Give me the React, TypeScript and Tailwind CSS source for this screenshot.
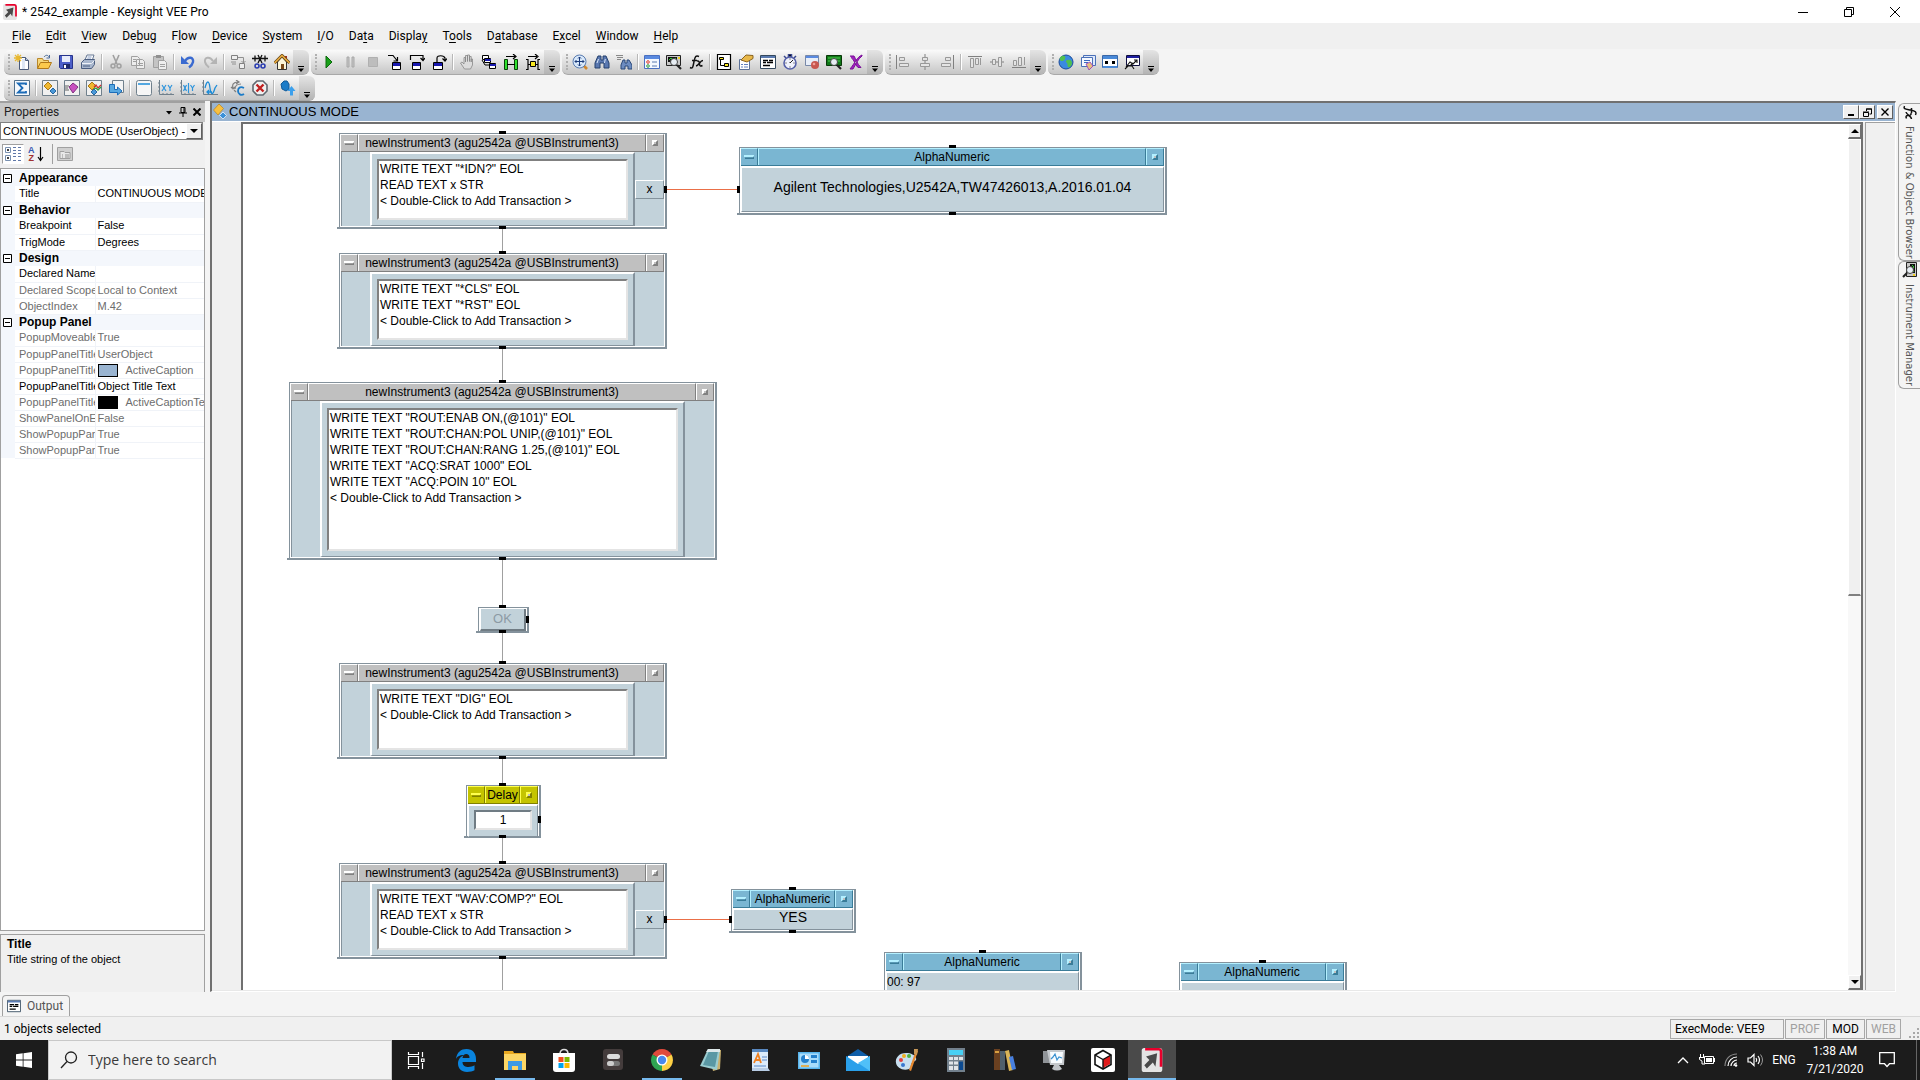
import type { ReactNode } from 'react';

const menus = [
  ['', 'F', 'ile'],
  ['', 'E', 'dit'],
  ['', 'V', 'iew'],
  ['De', 'b', 'ug'],
  ['F', 'l', 'ow'],
  ['', 'D', 'evice'],
  ['', 'S', 'ystem'],
  ['', 'I', '/O'],
  ['Da', 't', 'a'],
  ['Displa', 'y', ''],
  ['T', 'o', 'ols'],
  ['D', 'a', 'tabase'],
  ['E', 'x', 'cel'],
  ['', 'W', 'indow'],
  ['', 'H', 'elp'],
];

const GREY = '#a0a0a0';

const icons: Record<string, ReactNode> = {
  New: (
    <>
      <path d="M5.5 3.5h6l3 3v9h-9z" fill="#fff" stroke="#4a5a78" />
      <path d="M8 5h3v10H8z" fill="#dde6f4" />
      <path d="M11.5 3.5v3h3" fill="#b8c8e0" stroke="#4a5a78" />
      <path d="M4 0v8M0 4h8M1 1l6 6M7 1L1 7" stroke="#e8b830" strokeWidth="1.3" />
    </>
  ),
  Open: (
    <>
      <path d="M1.5 14.5v-10h5l1 2h5v3" fill="#f6d77a" stroke="#b8862a" />
      <path d="M1.5 14.5l3-6h11l-3 6z" fill="#fbc94c" stroke="#b07818" />
      <path d="M8 3c2-2.5 4-2 5 0M13.5 1v3h-3" fill="none" stroke="#4a6a98" />
    </>
  ),
  Save: (
    <>
      <path d="M1.5 1.5h13v13h-12l-1-1z" fill="#4d5fc8" stroke="#27348c" />
      <path d="M4 2h8v6H4z" fill="#e8ecfa" />
      <path d="M5 10h7v4H5z" fill="#1f2a6a" />
      <path d="M6 11h2v3H6z" fill="#fff" />
    </>
  ),
  Print: (
    <>
      <path d="M5 6l2-5h7l-2 6z" fill="#fff" stroke="#667894" />
      <path d="M7.5 3h4M7 5h4" stroke="#8aa0c8" />
      <path d="M1.5 8.5l3-3h10v5l-3 4h-10z" fill="#a9b7cd" stroke="#4b5e80" />
      <path d="M2 9.5h9.5l3-3" fill="none" stroke="#eef2f8" />
      <path d="M3 12h7" stroke="#4b5e80" />
    </>
  ),
  Cut: (
    <>
      <path d="M5 1l4 9M11 1L7 10" stroke={GREY} strokeWidth="1.6" />
      <circle cx="5" cy="12" r="2" fill="none" stroke={GREY} strokeWidth="1.5" />
      <circle cx="11" cy="12" r="2" fill="none" stroke={GREY} strokeWidth="1.5" />
    </>
  ),
  Copy: (
    <>
      <path d="M1.5 2.5h6l2 2v7h-8zM6.5 5.5h6l2 2v7h-8z" fill="#ededed" stroke={GREY} />
      <path d="M3 5.5h3M3 7.5h3M8 9.5h5M8 11.5h5" stroke={GREY} />
    </>
  ),
  Paste: (
    <>
      <path d="M1.5 2.5h10v11h-10z" fill="#c4c4c4" stroke={GREY} />
      <path d="M4 1h5v3H4z" fill="#909090" />
      <path d="M6.5 6.5h6l2 2v7h-8z" fill="#eee" stroke={GREY} />
      <path d="M8 10.5h5M8 12.5h5" stroke={GREY} />
    </>
  ),
  Undo: (
    <>
      <path d="M5 7c3-5 9-4 8 1-.5 2.5-2 4-4 5.5" fill="none" stroke="#3a6ad0" strokeWidth="2.4" />
      <path d="M1 2v8h8z" fill="#3a6ad0" />
    </>
  ),
  Redo: (
    <>
      <path d="M11 7C8 2 2 3 3 8c.5 2.5 2 4 4 5.5" fill="none" stroke="#b4b4b4" strokeWidth="2" />
      <path d="M15 3v7H8z" fill="#b4b4b4" />
    </>
  ),
  'Add terminal': (
    <>
      <path d="M1.5 1.5h6v4h-6zM9.5 9.5h5v5h-5z" fill="#eee" stroke="#808080" />
      <path d="M8 3.5h5.5V9M11.5 7l2 2 2-2M1 8h5M2 10h4" fill="none" stroke="#909090" />
    </>
  ),
  'Clean up lines': (
    <>
      <path d="M0 4.5h3v-3M3 4.5v3M16 4.5h-3v-3M13 4.5v3M3 4.5h10M6 1l4 8M10 1L6 9" fill="none" stroke="#111" strokeWidth="1.3" />
      <circle cx="5" cy="12" r="2" fill="none" stroke="#2a3cb0" strokeWidth="1.6" />
      <circle cx="11" cy="12" r="2" fill="none" stroke="#2a3cb0" strokeWidth="1.6" />
    </>
  ),
  Home: (
    <>
      <path d="M11 2h2v5h-2z" fill="#a03020" />
      <path d="M3.5 8v7.5h9V8L8 3z" fill="#fdf6d8" stroke="#333" />
      <path d="M.5 9L8 1.5 15.5 9" fill="none" stroke="#6a4a18" strokeWidth="3" />
      <path d="M.5 9L8 1.5 15.5 9" fill="none" stroke="#f0b040" strokeWidth="1.4" />
      <path d="M7 10h3v5H7z" fill="#7a4a18" />
    </>
  ),
  Run: <path d="M5 2l6 6-6 6z" fill="#18a018" stroke="#0c6a0c" />,
  Pause: <path d="M4 3h2v10H4zM9 3h2v10H9z" fill="#c6c6c6" stroke="#a8a8a8" />,
  Stop: <path d="M3.5 3.5h9v9h-9z" fill="#bdbdbd" stroke="#b0b0b0" />,
  'Step into': (
    <>
      <path d="M1 1.5h5l4 5M10.5 3v4h-4" fill="none" stroke="#000" strokeWidth="1.2" />
      <path d="M5.5 8.5h8v7h-8z" fill="#fff" stroke="#000" />
      <path d="M6 9h7v3H6z" fill="#1818b0" />
    </>
  ),
  'Step over': (
    <>
      <path d="M1.5 6V1.5H14V6M11.5 4L14 6.5 16 4" fill="none" stroke="#000" strokeWidth="1.2" />
      <path d="M3.5 8.5h8v7h-8z" fill="#fff" stroke="#000" />
      <path d="M4 9h7v3H4z" fill="#1818b0" />
    </>
  ),
  'Step out': (
    <>
      <path d="M6 8V4c0-3 7-3 8 0v2M11.5 4.5L14 7l2-2.5" fill="none" stroke="#000" strokeWidth="1.2" />
      <path d="M2.5 8.5h9v7h-9z" fill="#fff" stroke="#000" />
      <path d="M3 9h8v3H3z" fill="#1818b0" />
    </>
  ),
  Breakpoint: (
    <path
      d="M5.5 15l-4-6 1.5-1 2 2V3.5h1.5V8 1.5h2V7.5 1h2v6.5V2.5h1.7V8 5h1.3v6l-2 4z"
      fill="#dcdcdc"
      stroke="#888"
      strokeWidth=".8"
    />
  ),
  'Line probe': (
    <>
      <path d="M1.5 1.5h6v4h-6zM3.5 4.5h6v4h-6zM8.5 9.5h6v5h-6z" fill="#fff" stroke="#000" />
      <path d="M4 5h6v2H4zM9 10h6v2H9z" fill="#1818b0" />
      <path d="M1 6l3 5h4" fill="none" stroke="#000" />
    </>
  ),
  'Show data flow': (
    <>
      <path d="M1.5 5.5h3v10h-3zM11.5 5.5h3v10h-3z" fill="#30e030" stroke="#084008" />
      <path d="M4 10.5h8M3 2.5h9M10 0l3 2.5L10 5" fill="none" stroke="#000" strokeWidth="1.2" />
    </>
  ),
  'Show execution flow': (
    <>
      <path d="M1 5.5h2v10H1M15 5.5h-2v10h2M3 10.5h10M3 2.5h9M10 0l3 2.5L10 5" fill="none" stroke="#000" strokeWidth="1.2" />
      <path d="M5.5 7.5h5v5h-5z" fill="#f8e820" stroke="#000" />
    </>
  ),
  Zoom: (
    <>
      <path d="M11 11l4 4" stroke="#d08830" strokeWidth="2.6" />
      <circle cx="7.5" cy="7.5" r="6.5" fill="#d8e8fa" stroke="#5a7cb0" />
      <path
        d="M7.5 3v9M3 7.5h9M6 4.5L7.5 3 9 4.5M6 10.5L7.5 12 9 10.5M4.5 6L3 7.5 4.5 9M10.5 6L12 7.5 10.5 9"
        fill="none"
        stroke="#1a3a7a"
      />
    </>
  ),
  Find: (
    <>
      <path d="M4 2h3v4h2V2h3l3 7v5h-5v-5H6v5H1V9z" fill="#5a78b0" stroke="#24406e" />
      <path d="M3 9l1.5-4M10.5 9l.8-4" stroke="#dce8fa" />
    </>
  ),
  'Find in file': (
    <>
      <path d="M0 1.5h7M1 3.5h6M1 5.5h4" stroke="#888" />
      <path d="M7 6h2v3h2V6h2l3 5v4h-4v-3H9v3H5v-4z" fill="#6d8cc0" stroke="#2a4878" />
    </>
  ),
  'Program explorer': (
    <>
      <path d="M.5 1.5h15v13H.5z" fill="#f4f8ff" stroke="#4a70c0" />
      <path d="M1 2h14v3H1z" fill="#5a8ae0" />
      <circle cx="4" cy="8" r="1.3" fill="none" stroke="#e04030" />
      <circle cx="4" cy="12" r="1.3" fill="none" stroke="#30a040" />
      <path d="M8 8h5M8 12h5" stroke="#5a7ab0" />
    </>
  ),
  'Instrument manager': (
    <>
      <path d="M.5 1.5h14v10H.5z" fill="#c8c8c8" stroke="#222" />
      <path d="M2 3h9v5H2z" fill="#111" />
      <path d="M3 6l2-2 2 2 3-2" fill="none" stroke="#30d030" />
      <circle cx="8" cy="8" r="3.5" fill="#e8eef4" stroke="#444" />
      <path d="M11 11l4 4" stroke="#222" strokeWidth="2.2" />
      <path d="M12 3h2v2h-2z" fill="#f0d020" />
    </>
  ),
  'Function browser': (
    <path
      d="M2 13.5c3 1.5 3-1 4-6s2-6.5 5-5M4 6.5h5M9 7c2-.5 2.5 1 2.5 3s1 2.5 3 1.5M15 6.5c-3 0-4 5-7 5.5"
      fill="none"
      stroke="#111"
      strokeWidth="1.5"
    />
  ),
  'Example explorer': (
    <>
      <path d="M1.5.5h13v15h-13z" fill="#fff" stroke="#000" strokeWidth="1.2" />
      <path d="M4.5 5v6.5H8" fill="none" stroke="#000" />
      <path d="M3.5 3.5h4v2h-4zM8.5 9.5h4v3h-4z" fill="#f8e820" stroke="#000" />
    </>
  ),
  Properties: (
    <>
      <path d="M1.5 5.5h10v10h-10z" fill="#fff" stroke="#5a7098" />
      <path d="M3 10.5h2M6 10.5h4M3 13h2M6 13h4" stroke="#6080c0" />
      <path d="M3 6l5-5 7 .5v3L9 8z" fill="#e8b84a" stroke="#8a6420" />
    </>
  ),
  Output: (
    <>
      <path d="M.5 1.5h15v13H.5z" fill="#fff" stroke="#34495e" />
      <path d="M1 2h14v2H1z" fill="#5a7ab0" />
      <path d="M3 6.5h5M9 6.5h4M3 8.5h3M7 8.5h6M3 11.5h7" stroke="#000" strokeWidth="1.3" />
    </>
  ),
  Profiler: (
    <>
      <path d="M6.5 0h3v3h-3zM2 2l2 2M14 2l-2 2" stroke="#3a4a90" strokeWidth="1.5" />
      <circle cx="8" cy="9" r="6" fill="#f0f2fc" stroke="#5560a8" strokeWidth="1.6" />
      <path d="M8 9l3-3M8 9V8M8 4.5v1M8 12.5v1M3.5 9h1M11.5 9h1" stroke="#222" />
    </>
  ),
  'Stop on error': (
    <>
      <path d="M1.5 1.5h13v10h-13z" fill="#e8eef8" stroke="#7888a8" />
      <path d="M2 2h12v2H2z" fill="#5a8ae0" />
      <circle cx="11" cy="11" r="4" fill="#c85850" />
      <circle cx="10" cy="10" r="1.3" fill="#f0a098" />
    </>
  ),
  'Alert window': (
    <>
      <path d="M.5 1.5h15v10H.5z" fill="#107818" stroke="#083808" />
      <path d="M2 4h12M2 7h12" stroke="#50d050" />
      <circle cx="8" cy="8" r="3.5" fill="#e8eef4" stroke="#444" />
      <path d="M11 11l4 4" stroke="#222" strokeWidth="2.2" />
    </>
  ),
  'Excel library': (
    <path d="M2 2h4c2 3 3 8 7 11.5h-3C7 11 6 5 3 3.5M14 1C9 3 7 9 2 15h3C8 10 10 5 14 2z" fill="#a020c0" stroke="#7a1098" />
  ),
  'Align left': (
    <>
      <path d="M1.5 1v14" stroke="#808080" />
      <path d="M4.5 3.5h5v3h-5zM4.5 9.5h9v3h-9z" fill="#e4e4e4" stroke="#989898" />
    </>
  ),
  'Align center': (
    <>
      <path d="M8 0v16" stroke="#808080" />
      <path d="M5.5 3.5h5v3h-5zM3.5 9.5h9v3h-9z" fill="#e4e4e4" stroke="#989898" />
    </>
  ),
  'Align right': (
    <>
      <path d="M14.5 1v14" stroke="#808080" />
      <path d="M6.5 3.5h5v3h-5zM2.5 9.5h9v3h-9z" fill="#e4e4e4" stroke="#989898" />
    </>
  ),
  'Align top': (
    <>
      <path d="M1 2.5h14" stroke="#808080" />
      <path d="M3.5 4.5h3v9h-3zM8.5 4.5h3v6h-3zM13.5 4v7" fill="#e4e4e4" stroke="#989898" />
    </>
  ),
  'Align middle': (
    <>
      <path d="M1 8h14" stroke="#808080" />
      <path d="M3.5 5.5h3v5h-3zM9.5 3.5h3v9h-3z" fill="#e4e4e4" stroke="#989898" />
    </>
  ),
  'Align bottom': (
    <>
      <path d="M1 13.5h14" stroke="#808080" />
      <path d="M2.5 6.5h3v5h-3zM7.5 3.5h3v8h-3zM13.5 3v8" fill="#e4e4e4" stroke="#989898" />
    </>
  ),
  'Web site': (
    <>
      <circle cx="8" cy="8" r="7" fill="#3a8ae0" stroke="#1c4a9a" />
      <path d="M4 2c3-1 4 1 3 3S3 8 2 6s0-3 2-4zM9 6c3-1 5 0 5 3s-3 5-4 4 0-3-1-4-2-2 0-3z" fill="#50c050" />
    </>
  ),
  Documents: (
    <>
      <path d="M3.5 1.5h12v10h-12z" fill="#dfe9fa" stroke="#4a70b8" />
      <path d="M1.5 3.5h11v9h-11z" fill="#f4f8ff" stroke="#4a70b8" />
      <path d="M4 6.5h6M4 8.5h4" stroke="#3a6ac0" />
      <path d="M6 10l4-2 3 4-4 4z" fill="#e8c080" stroke="#a050b8" />
    </>
  ),
  Panel: (
    <>
      <path d="M.5 1.5h15v12H.5z" fill="#fff" stroke="#3a68a8" />
      <path d="M1 2h14v3H1zM1 12h14v2H1z" fill="#4a8ad8" />
      <path d="M3 7h3v3H3zM10 7h3v3h-3z" fill="#000" />
    </>
  ),
  Plotter: (
    <>
      <path d="M2.5 1.5h13v10h-13z" fill="#fff" stroke="#101040" />
      <path d="M3 2h12v2H3z" fill="#2020a0" />
      <path d="M2 13l4-5 3 2 4-4M10 6h3v3M1 15l3-3h4l2 3M6 12l3-3" fill="none" stroke="#111" strokeWidth="1.1" />
    </>
  ),
  Formula: (
    <>
      <path d="M.5.5h15v15H.5z" fill="#f4f8fc" stroke="#50708c" />
      <path d="M12 5V3.5H4L8.5 8 4 12.5h8V11" fill="none" stroke="#1c6cb8" strokeWidth="1.8" />
    </>
  ),
  'User object': (
    <>
      <path d="M.5.5h15v15H.5z" fill="#f0f0f0" stroke="#70808c" />
      <path d="M6 2l4 4-4 4-4-4z" fill="#f0b830" stroke="#a87818" />
      <path d="M11 8l3 3-3 3-3-3z" fill="#4a98d8" stroke="#2868a0" />
    </>
  ),
  'User function': (
    <>
      <path d="M.5.5h15v15H.5z" fill="#f0f0f0" stroke="#70808c" />
      <path d="M9 3l5 4-5 6-4-6z" fill="#c850c0" stroke="#803080" />
      <path d="M1 6h4M1 8h3M1 10h4" stroke="#606060" />
    </>
  ),
  'Call function': (
    <>
      <path d="M.5.5h15v15H.5z" fill="#f0f0f0" stroke="#70808c" />
      <path d="M6 2l4 4-4 4-4-4z" fill="#f0b830" stroke="#a87818" />
      <path d="M8 7l2-2 2 3 3-3" fill="none" stroke="#d03030" strokeWidth="1.3" />
      <path d="M8 9l2-1 2 2 3-3" fill="none" stroke="#30a040" strokeWidth="1.3" />
      <path d="M8 9l3 3-3 3-3-3z" fill="#4a98d8" stroke="#2868a0" />
    </>
  ),
  Import: (
    <>
      <path d="M4.5.5h11v12h-11z" fill="#f4f4f4" stroke="#70808c" />
      <path d="M1.5 4.5h5v5h3V7l4.5 4-4.5 4v-2.5h-8z" fill="#58a8e0" stroke="#1c6cb8" />
    </>
  ),
  Display: (
    <>
      <rect x=".5" y=".5" width="15" height="15" rx="2" fill="#f6f6f6" stroke="#70808c" />
      <path d="M2 4h12" stroke="#1c8cd8" strokeWidth="1.6" />
    </>
  ),
  'XY trace': (
    <>
      <path d="M1.5 0v14.5H16M0 3h2M0 7h2M0 11h2M5 13v2M9 13v2M13 13v2" fill="none" stroke="#70808c" />
      <path d="M4 5l4 6M8 5l-4 6M10 5l2 3 2-3M12 8v3" fill="none" stroke="#2c94dc" strokeWidth="1.2" />
    </>
  ),
  'X vs Y plot': (
    <>
      <path d="M1.5 0v14.5H16M0 3h2M0 7h2M0 11h2M5 13v2M9 13v2M13 13v2" fill="none" stroke="#70808c" />
      <path d="M3.5 5l3 6M6.5 5l-3 6M8.5 3v10M10.5 5l2 3 2-3M12.5 8v3" fill="none" stroke="#2c94dc" strokeWidth="1.2" />
    </>
  ),
  'Waveform display': (
    <>
      <path d="M1.5 0v14.5H16M0 3h2M0 7h2M0 11h2" fill="none" stroke="#70808c" />
      <path d="M3 8c2-8 4-8 5 0s3 7 5 0l2-3M10 12H5M7 10l-2 2 2 2" fill="none" stroke="#1c8cd8" strokeWidth="1.3" />
    </>
  ),
  'Confirm context': (
    <>
      <path d="M8 2C3 2 2 5 3 8M11 4C7 4 5 6 5 9M6 0l3 2-3 2M1 7l2 2 2-2M4 10l2 2" fill="none" stroke="#808080" strokeWidth="1.2" />
      <path d="M14 8c-4-2-6 0-6 3s3 5 6 3" fill="none" stroke="#1c7cc8" strokeWidth="1.8" />
    </>
  ),
  'Delete object': (
    <>
      <path d="M5 1h6l4 4v6l-4 4H5l-4-4V5z" fill="#f0f0f0" stroke="#606870" strokeWidth="1.6" />
      <path d="M4.5 4.5l7 7M11.5 4.5l-7 7" stroke="#c02020" strokeWidth="2.4" />
    </>
  ),
  Upload: (
    <>
      <path d="M1 4l3-3h3l2 3v5l-3 2-4-2z" fill="#1c7cc8" stroke="#125a98" />
      <path d="M11.5 6l4 5H13v4.5h-3V11H7.5z" fill="#3ca0ec" />
    </>
  ),
};

const toolbarTop = [
  ['New', 'Open', 'Save', 'Print', '|', 'Cut', 'Copy', 'Paste', '|', 'Undo', 'Redo', '|', 'Add terminal', 'Clean up lines', 'Home'],
  ['Run', 'Pause', 'Stop', 'Step into', 'Step over', 'Step out', '|', 'Breakpoint', 'Line probe', 'Show data flow', 'Show execution flow'],
  ['Zoom', 'Find', 'Find in file', '|', 'Program explorer', 'Instrument manager', 'Function browser', '|', 'Example explorer', 'Properties', 'Output', 'Profiler', 'Stop on error', 'Alert window', 'Excel library'],
  ['Align left', 'Align center', 'Align right', '|', 'Align top', 'Align middle', 'Align bottom'],
  ['Web site', 'Documents', 'Panel', 'Plotter'],
];

const toolbarBottom = [
  ['Formula', '|', 'User object', 'User function', 'Call function', 'Import', '|', 'Display', 'XY trace', 'X vs Y plot', 'Waveform display', '|', 'Confirm context', 'Delete object', '|', 'Upload'],
];

type Row = { name: string; value?: string; dim?: boolean; swatch?: 'caption' | 'text' };

const propertyGroups: { title: string; rows: Row[] }[] = [
  { title: 'Appearance', rows: [{ name: 'Title', value: 'CONTINUOUS MODE' }] },
  {
    title: 'Behavior',
    rows: [
      { name: 'Breakpoint', value: 'False' },
      { name: 'TrigMode', value: 'Degrees' },
    ],
  },
  {
    title: 'Design',
    rows: [
      { name: 'Declared Name' },
      { name: 'Declared Scope', value: 'Local to Context', dim: true },
      { name: 'ObjectIndex', value: 'M.42', dim: true },
    ],
  },
  {
    title: 'Popup Panel',
    rows: [
      { name: 'PopupMoveable', value: 'True', dim: true },
      { name: 'PopupPanelTitle', value: 'UserObject', dim: true },
      { name: 'PopupPanelTitle', value: 'ActiveCaption', dim: true, swatch: 'caption' },
      { name: 'PopupPanelTitle', value: 'Object Title Text' },
      { name: 'PopupPanelTitle', value: 'ActiveCaptionText', dim: true, swatch: 'text' },
      { name: 'ShowPanelOnE', value: 'False', dim: true },
      { name: 'ShowPopupPar', value: 'True', dim: true },
      { name: 'ShowPopupPar', value: 'True', dim: true },
    ],
  },
];

type Tone = 'grey' | 'blue' | 'yellow';

const tones: Record<Tone, { bar: string; cell: string; hi: string; lo: string }> = {
  grey: { bar: 'bg-[#c0c0c0] border-b-[#808080]', cell: 'border-white border-r-[#808080]', hi: '#ffffff', lo: '#808080' },
  blue: { bar: 'bg-[#7ab6d2] border-b-[#3a7c98]', cell: 'border-[#b4f0ff] border-r-[#3a7c98]', hi: '#b4f0ff', lo: '#3a7c98' },
  yellow: { bar: 'bg-[#c4c400] border-b-[#808000]', cell: 'border-[#ffff50] border-r-[#808000]', hi: '#ffff50', lo: '#808000' },
};

const instrumentTitle = 'newInstrument3 (agu2542a @USBInstrument3)';
const addLine = '< Double-Click to Add Transaction >';

const instruments = [
  { x: 96, y: 9, w: 328, h: 96, output: 'x', lines: ['WRITE TEXT "*IDN?" EOL', 'READ TEXT x STR', addLine] },
  { x: 96, y: 129, w: 328, h: 96, lines: ['WRITE TEXT "*CLS" EOL', 'WRITE TEXT "*RST" EOL', addLine] },
  {
    x: 46,
    y: 258,
    w: 428,
    h: 178,
    lines: [
      'WRITE TEXT "ROUT:ENAB ON,(@101)" EOL',
      'WRITE TEXT "ROUT:CHAN:POL UNIP,(@101)" EOL',
      'WRITE TEXT "ROUT:CHAN:RANG 1.25,(@101)" EOL',
      'WRITE TEXT "ACQ:SRAT 1000" EOL',
      'WRITE TEXT "ACQ:POIN 10" EOL',
      addLine,
    ],
  },
  { x: 96, y: 539, w: 328, h: 96, lines: ['WRITE TEXT "DIG" EOL', addLine] },
  { x: 96, y: 739, w: 328, h: 96, output: 'x', lines: ['WRITE TEXT "WAV:COMP?" EOL', 'READ TEXT x STR', addLine] },
];

const wires = [
  [105, 129],
  [225, 258],
  [436, 483],
  [509, 539],
  [635, 661],
  [714, 739],
  [835, 880],
];

function Icon({ name }: { name: string }) {
  return (
    <svg viewBox="0 0 16 16" className="h-4 w-4" aria-hidden="true">
      {icons[name]}
    </svg>
  );
}

function Logo({ className }: { className: string }) {
  return (
    <svg viewBox="0 0 24 28" className={className} aria-hidden="true">
      <rect width="24" height="28" rx="3" fill="#e4e4e4" />
      <path d="M4 1.5h16q2.5 0 2.5 3V22" fill="none" stroke="#e8002c" strokeWidth="3" />
      <path d="M5 10l13-4-2 16-3-5-7 7-3-4 6-6z" fill="#4a4a4a" />
    </svg>
  );
}

function Toolbar({ items }: { items: string[] }) {
  return (
    <div role="toolbar" className="flex h-[25px] items-stretch overflow-hidden rounded-md border-b border-[#a8a8a8] bg-linear-to-b from-[#fafafa] to-[#c6c6c6]">
      <span className="my-1 ml-1 w-[3px] border-l-2 border-dotted border-[#b0b0b0]" />
      {items.map((item, i) =>
        item === '|' ? (
          <span key={i} className="mx-0.5 my-1 w-0.5 border-l border-[#b8b8b8] bg-white" />
        ) : (
          <button key={i} type="button" aria-label={item} className="flex w-[22px] items-center justify-center">
            <Icon name={item} />
          </button>
        ),
      )}
      <button type="button" aria-label="Toolbar options" className="flex w-4 items-end justify-center bg-linear-to-b from-[#e4e4e4] to-[#b4b4b4] pb-0.5">
        <svg viewBox="0 0 6 6" className="h-1.5 w-1.5">
          <path d="M0 0h6v1H0zM0 2.5h6L3 6z" fill="#000" />
        </svg>
      </button>
    </div>
  );
}

function PropertiesPanel() {
  return (
    <aside className="flex w-[205px] shrink-0 flex-col bg-[#f0f0f0]">
      <div className="flex h-[21px] items-center justify-between border-t-2 border-[#a0a0a0] bg-[#c8c8c8] pr-1 pb-px pl-1 text-[#222]">
        <h2>Properties</h2>
        <div className="flex items-center gap-1.5">
          <button type="button" aria-label="Panel menu">
            <svg viewBox="0 0 8 8" className="h-2 w-2">
              <path d="M1 3h6L4 6.5z" />
            </svg>
          </button>
          <button type="button" aria-label="Auto hide">
            <svg viewBox="0 0 8 10" className="h-2.5 w-2">
              <path d="M2 .5h4v5H2zM5 0v6M0 6h8M4 6v4" fill="none" stroke="#000" />
            </svg>
          </button>
          <button type="button" aria-label="Close panel">
            <svg viewBox="0 0 8 8" className="h-2 w-2">
              <path d="M.5.5l7 7M7.5.5l-7 7" stroke="#000" strokeWidth="2" />
            </svg>
          </button>
        </div>
      </div>
      <div className="relative mr-0.5 h-[18px] border border-[#808080] bg-white font-['Liberation_Sans',sans-serif] text-[11px]">
        <select aria-label="Selected object" className="h-4 w-full appearance-none overflow-hidden pl-0.5 whitespace-pre">
          <option>CONTINUOUS MODE (UserObject) -</option>
        </select>
        <span className="pointer-events-none absolute top-0 right-0 flex h-4 w-4 items-center justify-center border border-white border-r-[#606060] border-b-[#606060] bg-[#f0f0f0]">
          <svg viewBox="0 0 8 4" className="h-1 w-2">
            <path d="M0 0h8L4 4z" />
          </svg>
        </span>
      </div>
      <div className="flex h-[28px] items-center gap-1 pl-0.5">
        <button type="button" aria-label="Categorized" className="flex h-5 w-[22px] items-center justify-center border border-[#a0a0a0] border-r-white border-b-white bg-white">
          <svg viewBox="0 0 16 16" className="h-4 w-4">
            <path d="M.5 1.5h5v5h-5zM.5 9.5h5v5h-5z" fill="#fff" stroke="#7890b0" />
            <path d="M2 4h2M3 3v2M2 12h2M3 11v2" stroke="#000" />
            <path
              d="M8 1.5h3M8 4.5h3M8 7.5h3M8 10.5h3M8 14.5h3M13 1.5h3M13 4.5h3M13 7.5h3M13 10.5h3M13 14.5h3"
              stroke="#6078a8"
            />
          </svg>
        </button>
        <button type="button" aria-label="Alphabetical" className="flex items-center font-['Liberation_Sans',sans-serif] text-[9px] leading-2 font-bold">
          <span className="flex flex-col">
            <span className="text-[#3858b0]">A</span>
            <span className="text-[#a03030]">Z</span>
          </span>
          <svg viewBox="0 0 7 16" className="ml-0.5 h-4 w-[7px]">
            <path d="M3.5 1v13M1 11l2.5 3.5L6 11" fill="none" stroke="#000" strokeWidth="1.2" />
          </svg>
        </button>
        <span className="ml-1 h-5 w-px bg-[#a0a0a0]" />
        <button type="button" aria-label="Property pages">
          <svg viewBox="0 0 16 16" className="h-4 w-4">
            <path d="M.5 1.5h15v13H.5z" fill="#d0d0d0" stroke="#a0a0a0" />
            <path d="M3 5.5h4l1 1h5v6H3z" fill="#e8e8e8" stroke="#a0a0a0" />
            <path d="M5 9h1M8 9h4M5 11h1M8 11h4" stroke="#909090" />
          </svg>
        </button>
      </div>
      <div className="flex-1 overflow-hidden border border-[#a0a0a0] bg-white pt-px font-['Liberation_Sans',sans-serif] text-[11px] leading-[15px]">
        <table className="w-full table-fixed border-collapse">
          <colgroup>
            <col className="w-3.5" />
            <col className="w-[80px]" />
            <col />
          </colgroup>
          {propertyGroups.map((group) => (
            <tbody key={group.title}>
              <tr className="h-4 bg-[#f4f7fc]">
                <td className="p-0 pl-0.5">
                  <svg viewBox="0 0 9 9" className="h-[9px] w-[9px]">
                    <path d="M.5.5h8v8h-8z" fill="#fff" stroke="#000" />
                    <path d="M2 4.5h5" stroke="#000" />
                  </svg>
                </td>
                <th colSpan={2} className="p-0 pl-1 text-left text-xs leading-[15px] font-bold">
                  {group.title}
                </th>
              </tr>
              {group.rows.map((row, i) => (
                <tr key={i} className={row.dim ? 'h-4 text-[#6d6d6d]' : 'h-4'}>
                  <td className="bg-[#f4f7fc] p-0" />
                  <td className="overflow-hidden border-r border-b border-[#f0f3f8] p-0 pl-1 whitespace-nowrap">{row.name}</td>
                  <td className="overflow-hidden border-b border-[#f0f3f8] p-0 pl-0.5 whitespace-nowrap">
                    <span className="flex items-center">
                      {row.swatch && (
                        <span
                          className={
                            row.swatch === 'caption'
                              ? 'mr-2 h-[13px] w-5 shrink-0 border border-black bg-[#99b4d1]'
                              : 'mr-2 h-[13px] w-5 shrink-0 border border-black bg-black'
                          }
                        />
                      )}
                      {row.value}
                    </span>
                  </td>
                </tr>
              ))}
            </tbody>
          ))}
        </table>
      </div>
      <div className="mt-[3px] h-[58px] border border-b-0 border-[#a0a0a0] pt-0.5 pl-1.5 font-['Liberation_Sans',sans-serif] text-[11px] leading-[15px]">
        <h3 className="text-xs leading-[15px] font-bold">Title</h3>
        <p>Title string of the object</p>
      </div>
    </aside>
  );
}

function Pin({ x, y, side }: { x: number; y: number; side?: boolean }) {
  return <span className={side ? 'absolute h-[7px] w-[3px] bg-black' : 'absolute h-[3px] w-[7px] bg-black'} style={{ left: x, top: y }} />;
}

type NodeProps = {
  x: number;
  y: number;
  w: number;
  h: number;
  tone?: Tone;
  title?: string;
  leftPin?: number;
  rightPin?: number;
  children?: ReactNode;
};

function Node({ x, y, w, h, tone = 'grey', title, leftPin, rightPin, children }: NodeProps) {
  const t = tones[tone];
  const mid = Math.floor(w / 2) - 4;
  return (
    <section className="absolute" style={{ left: x, top: y, width: w, height: h }}>
      <span className="absolute bottom-0 -left-0.5 h-0.5 w-1 bg-[#84929c]" />
      <div className="flex h-full flex-col border-t border-r-2 border-b-2 border-l border-[#84929c] bg-white pr-px pb-px pl-px">
        {title && (
          <header className={`flex h-[18px] shrink-0 items-stretch border-b ${t.bar}`}>
            <button type="button" aria-label="Object menu" className={`flex w-[17px] items-center justify-center border-t border-r ${t.cell}`}>
              <svg viewBox="0 0 10 4" className="h-1 w-2.5">
                <path d="M0 0h10v2H0z" fill={t.hi} />
                <path d="M10 1v3H1V2.5h8z" fill={t.lo} />
              </svg>
            </button>
            <h3
              className={`flex-1 overflow-hidden border-t border-r border-l text-center leading-4 whitespace-nowrap ${t.cell} ${tone === 'grey' ? 'pr-5' : ''}`}
            >
              {title}
            </h3>
            <button type="button" aria-label="Minimize object" className={`flex w-[18px] items-center justify-center border-t border-r border-l ${t.cell}`}>
              <svg viewBox="0 0 6 6" className="h-1.5 w-1.5">
                <path d="M0 0h6L0 6z" fill={t.hi} />
                <path d="M6 0v6H0z" fill={t.lo} />
                <path d="M2 2h2v2H2z" fill="#c0c0c0" />
              </svg>
            </button>
          </header>
        )}
        {children}
      </div>
      <Pin x={mid} y={-2} />
      <Pin x={mid} y={h - 3} />
      {leftPin !== undefined && <Pin side x={-2} y={leftPin} />}
      {rightPin !== undefined && <Pin side x={w - 3} y={rightPin} />}
    </section>
  );
}

function InstrumentBody({ lines, output }: { lines: string[]; output?: string }) {
  return (
    <div className="flex flex-1 border-l border-[#84929c] bg-[#c2d2da]">
      <div className="w-7" />
      <div className="flex flex-1 border-t-2 border-r-2 border-b border-l-2 border-white border-r-[#84929c] border-b-[#84929c] p-[5px]">
        <ul className="flex-1 border-2 border-[#808080] border-r-[#e4e4e4] border-b-[#e4e4e4] bg-white pl-px leading-4 whitespace-nowrap">
          {lines.map((line) => (
            <li key={line}>{line}</li>
          ))}
        </ul>
      </div>
      <div className="w-[29px] pt-7">
        {output && (
          <div className="h-[19px] border border-white border-r-[#84929c] border-b-[#84929c] text-center leading-4">{output}</div>
        )}
      </div>
    </div>
  );
}

function Readout({ children, className }: { children?: ReactNode; className: string }) {
  return (
    <div className={`flex flex-1 justify-center border border-t-2 border-white border-r-[#84929c] border-b-[#84929c] bg-[#c2d2da] ${className}`}>
      {children}
    </div>
  );
}

function Canvas() {
  return (
    <div className="relative flex-1 overflow-hidden border-t-2 border-l-2 border-[#707070] bg-white font-['Liberation_Sans',sans-serif] text-xs">
      <svg className="absolute inset-0 h-full w-full" aria-hidden="true">
        {wires.map(([from, to]) => (
          <path key={from} d={`M259.5 ${from}V${to}`} stroke="#a0a0a0" />
        ))}
        <path d="M424 65.5h72M424 795.5h64" stroke="#ea6f48" />
      </svg>
      {instruments.map(({ lines, output, ...box }) => (
        <Node key={box.y} {...box} title={instrumentTitle} rightPin={output ? 53 : undefined}>
          <InstrumentBody lines={lines} output={output} />
        </Node>
      ))}
      <Node x={496} y={23} w={428} h={68} tone="blue" title="AlphaNumeric" leftPin={39}>
        <Readout className="items-center pb-1.5 text-sm leading-4">Agilent Technologies,U2542A,TW47426013,A.2016.01.04</Readout>
      </Node>
      <Node x={235} y={483} w={51} h={26} rightPin={9}>
        <button
          type="button"
          disabled
          className="mt-px flex-1 border border-t-0 border-r-2 border-b-2 border-white border-r-[#707c84] border-b-[#707c84] bg-[#c2d2da] text-[13px] leading-5 text-[#8c9aa4]"
        >
          OK
        </button>
      </Node>
      <Node x={223} y={661} w={75} h={53} tone="yellow" title="Delay" rightPin={31}>
        <Readout className="px-[5px] pt-1 pb-1.5">
          <input
            type="text"
            aria-label="Delay"
            defaultValue="1"
            className="w-full min-w-0 border-2 border-[#707c84] border-r-[#e4e4e4] border-b-[#e4e4e4] bg-white text-center"
          />
        </Readout>
      </Node>
      <Node x={488} y={765} w={125} h={44} tone="blue" title="AlphaNumeric" leftPin={27}>
        <Readout className="items-start text-sm leading-[14px]">YES</Readout>
      </Node>
      <Node x={641} y={828} w={198} h={120} tone="blue" title="AlphaNumeric">
        <Readout className="justify-start text-xs leading-[18px]">00: 97</Readout>
      </Node>
      <Node x={936} y={838} w={168} h={120} tone="blue" title="AlphaNumeric">
        <Readout className="" />
      </Node>
    </div>
  );
}

function Scrollbar() {
  const button = 'flex h-[15px] items-center justify-center border border-white border-r-[#707070] border-b-2 border-b-[#707070] bg-[#f0f0f0]';
  return (
    <div className="flex w-[15px] flex-col border-t-2 border-r-2 border-[#707070] bg-[#f8f8f8]">
      <button type="button" aria-label="Scroll up" className={button}>
        <svg viewBox="0 0 8 4" className="h-1 w-2">
          <path d="M0 4h8L4 0z" />
        </svg>
      </button>
      <div className="flex-6 border border-white border-b-2 border-b-[#808080] bg-[#f0f0f0]" />
      <div className="flex-5" />
      <button type="button" aria-label="Scroll down" className={button}>
        <svg viewBox="0 0 8 4" className="h-1 w-2">
          <path d="M0 0h8L4 4z" />
        </svg>
      </button>
    </div>
  );
}

function MdiWindow() {
  const button = 'flex h-3.5 w-4 items-center justify-center border border-white border-r-[#606060] border-b-[#606060] bg-[#f0f0f0]';
  return (
    <main className="flex min-w-0 flex-1 flex-col border-t-2 border-r border-b border-l-2 border-[#707070] border-r-white border-b-white bg-[#f0f0f0]">
      <div className="flex h-[19px] items-center border-b border-white bg-[#99b4d1] pr-0.5 font-['Liberation_Sans',sans-serif] text-[13px]">
        <svg viewBox="0 0 14 16" className="mr-0.5 ml-px h-4 w-3.5" aria-hidden="true">
          <path d="M6 0l4.5 4.5L5 11 .5 6z" fill="#f8c040" stroke="#b88420" strokeWidth=".7" />
          <path d="M10 8l3.5 3.5L10 15l-3.5-3.5z" fill="#3c90d8" stroke="#e8f4ff" strokeWidth=".8" />
        </svg>
        <h1 className="flex-1">CONTINUOUS MODE</h1>
        <button type="button" aria-label="Minimize window" className={button}>
          <svg viewBox="0 0 8 8" className="h-2 w-2">
            <path d="M1 7h6" stroke="#000" strokeWidth="2" />
          </svg>
        </button>
        <button type="button" aria-label="Restore window" className={`mr-0.5 ${button}`}>
          <svg viewBox="0 0 9 9" className="h-[9px] w-[9px]">
            <path d="M3.5 3V1h5v5h-2M.5 4.5h5v4h-5zM3 1h6M0 4h6" fill="none" stroke="#000" />
          </svg>
        </button>
        <button type="button" aria-label="Close window" className={button}>
          <svg viewBox="0 0 8 8" className="h-2 w-2">
            <path d="M.5.5l7 7M7.5.5l-7 7" stroke="#000" strokeWidth="1.4" />
          </svg>
        </button>
      </div>
      <div className="flex min-h-0 flex-1 border-b border-[#e8e8e8] pl-[29px]">
        <Canvas />
        <Scrollbar />
        <div className="ml-0.5 w-[30px] border-t border-l border-[#a0a0a0]" />
      </div>
    </main>
  );
}

function SideTabs() {
  const tab = 'flex w-full items-center gap-1.5 rounded-l-md border border-r-0 border-[#a0a0a0] py-1 text-[#555] [writing-mode:vertical-rl]';
  return (
    <nav className="ml-0.5 w-[22px] shrink-0 pt-0.5 font-['DejaVu_Sans',sans-serif] text-[10px]">
      <button type="button" className={`h-[158px] ${tab}`}>
        <svg viewBox="0 0 16 16" className="h-4 w-4 rotate-90">
          {icons['Function browser']}
        </svg>
        Function &amp; Object Browser
      </button>
      <button type="button" className={`h-[128px] ${tab}`}>
        <svg viewBox="0 0 16 16" className="h-4 w-4 rotate-90">
          {icons['Instrument manager']}
        </svg>
        Instrument Manager
      </button>
    </nav>
  );
}

const taskApps: { name: string; state?: 'open' | 'active'; art: ReactNode }[] = [
  {
    name: 'Edge',
    art: (
      <path
        d="M2 11C3 4 7 1 12.5 1 18.5 1 22 5 22 11v3H8.5c0 4 3 5 6 5 2 0 4.5-.7 6-1.7v5C18.5 23.5 16 24 13 24 7 24 4 20 4 15.5c0-4 2.5-7 6-8.5-5 0-7 2-8 4zM8.5 10h7c0-3-1.2-4-3.3-4S8.7 8 8.5 10z"
        fill="#0a84de"
      />
    ),
  },
  {
    name: 'File Explorer',
    state: 'open',
    art: (
      <>
        <path d="M1 3h9l1 2h12v17H1z" fill="#e8a820" />
        <path d="M1 6h22v16H1z" fill="#fcd665" />
        <path d="M5 22v-9h14v9h-4v-4H9v4z" fill="#3c9ae4" />
      </>
    ),
  },
  {
    name: 'Microsoft Store',
    art: (
      <>
        <path d="M8 6c0-6 8-6 8 0" fill="none" stroke="#ddd" strokeWidth="1.6" />
        <path d="M1 5h22v16q0 3-3 3H4q-3 0-3-3z" fill="#fff" />
        <path d="M6.5 9h5v5h-5z" fill="#f25022" />
        <path d="M12.5 9h5v5h-5z" fill="#7fba00" />
        <path d="M6.5 15h5v5h-5z" fill="#00a4ef" />
        <path d="M12.5 15h5v5h-5z" fill="#ffb900" />
      </>
    ),
  },
  {
    name: 'Controls',
    art: (
      <>
        <rect x="2" y="1" width="20" height="21" rx="3" fill="#443c3c" />
        <rect x="6" y="6" width="13" height="5" rx="2.5" fill="#ddd" />
        <rect x="6" y="13" width="13" height="5" rx="2.5" fill="#777" />
        <rect x="6" y="13" width="7" height="5" rx="2.5" fill="#ccc" />
      </>
    ),
  },
  {
    name: 'Chrome',
    state: 'open',
    art: (
      <>
        <path d="M12 12L2.5 6.5A11 11 0 0 1 21.5 6.5z" fill="#e04a3c" />
        <path d="M12 12L2.5 6.5A11 11 0 0 0 12 23z" fill="#2fa552" />
        <path d="M12 12l9.5-5.5A11 11 0 0 1 12 23z" fill="#fdd045" />
        <circle cx="12" cy="12" r="5.5" fill="#fff" />
        <circle cx="12" cy="12" r="4.2" fill="#4a88ee" />
      </>
    ),
  },
  {
    name: 'Notepad',
    art: (
      <>
        <path d="M9 2h13l-1 19-7 2z" fill="#c8b070" />
        <path d="M9 1h12l-3 21L1 18z" fill="#9accd0" />
        <path d="M10 3h9l-3 16L4 17z" fill="#5a98a4" />
        <path d="M9 1h12v3H7z" fill="#dde8ea" />
      </>
    ),
  },
  {
    name: 'WordPad',
    art: (
      <>
        <path d="M4 1h16v22H4z" fill="#dcebfa" />
        <path d="M4 1h16v3H4z" fill="#5888c0" />
        <path d="M6 15l4-9 3 9M7.5 12h5" fill="none" stroke="#f08020" strokeWidth="1.8" />
        <path d="M14 9h5M14 12h5M6 18h12" stroke="#5a88c8" />
        <path d="M4 20h16l2 3H4z" fill="#b8cce4" />
      </>
    ),
  },
  {
    name: 'Control Panel',
    art: (
      <>
        <path d="M1 4h22v17H1z" fill="#58b4ec" />
        <path d="M2.5 5.5h19v14h-19z" fill="#a8dcfa" />
        <circle cx="8" cy="11" r="4" fill="#2480cc" />
        <path d="M8 11V7a4 4 0 0 1 4 4z" fill="#fff" />
        <path d="M14 7h6v3h-6zM14 12h6v3h-6z" fill="#2480cc" />
        <path d="M4 18h8" stroke="#f0a020" strokeWidth="1.5" />
      </>
    ),
  },
  {
    name: 'Mail',
    art: (
      <>
        <path d="M0 9L12 1l12 8v14H0z" fill="#0f5ea8" />
        <path d="M2 8h20v9H2z" fill="#fff" />
        <path d="M0 8l12 8L24 8v15H0z" fill="#2aa0ea" />
        <path d="M12 15L24 23V8z" fill="#50c0f8" />
      </>
    ),
  },
  {
    name: 'Paint',
    art: (
      <>
        <path d="M11 5C4 5 0 10 1 15s7 8 13 6c3-1 1-4 3-6s5-2 4-5-5-5-10-5z" fill="#c8dff0" />
        <circle cx="6" cy="12" r="2" fill="#e04040" />
        <circle cx="9" cy="8" r="2" fill="#f0b020" />
        <circle cx="14" cy="8" r="2" fill="#50b040" />
        <circle cx="8" cy="17" r="2" fill="#3878d0" />
        <path d="M21 2l2 1-7 20-2-1z" fill="#e88a30" />
        <path d="M19 1h4l-1 6-3-1z" fill="#c89858" />
      </>
    ),
  },
  {
    name: 'Calculator',
    art: (
      <>
        <path d="M3 0h18v24H3z" fill="#72808c" />
        <path d="M5 2h14v5H5z" fill="#48d0f4" />
        <path d="M5 9h4v3H5zM10 9h4v3h-4zM15 9h4v3h-4zM5 13.5h4v3H5zM10 13.5h4v3h-4zM5 18h4v4H5zM10 18h4v4h-4z" fill="#e0e4e8" />
        <path d="M15 13.5h4V22h-4z" fill="#0c4a90" />
      </>
    ),
  },
  {
    name: 'Library',
    art: (
      <>
        <path d="M1 1h6v21H1z" fill="#6a4020" />
        <path d="M2 3h4v2H2z" fill="#d8a040" />
        <path d="M7 3h5v19H7z" fill="#50606c" />
        <path d="M12 3l4-1 4 20-4 1z" fill="#d8b458" />
        <path d="M16 9l4-1 3 13-4 1z" fill="#4880e0" />
      </>
    ),
  },
  {
    name: 'Monitor',
    art: (
      <>
        <path d="M1 3h14v12H1z" fill="#909498" />
        <path d="M5 2h18l-1 15H8z" fill="#c4c8cc" />
        <path d="M8 4h13l-1 11H9z" fill="#f8fcff" />
        <path d="M9 11l2-2 2-3 2 6 2-3 3 1" fill="none" stroke="#3890d0" strokeWidth="1.2" />
        <path d="M12 17h5l3 4q-5 3-10 0z" fill="#c0c4c8" />
      </>
    ),
  },
  {
    name: 'Package',
    art: (
      <>
        <rect width="24" height="24" rx="2" fill="#fff" />
        <path d="M12 2.5l8 4.5v9.5L12 21l-8-4.5V7z" fill="#fff" stroke="#111" strokeWidth="1.6" />
        <path d="M12 11.5l7-4v8.5l-7 4z" fill="#e01818" />
        <path d="M4 7l8 4.5L20 7M12 11.5V21" fill="none" stroke="#111" strokeWidth="1.4" />
      </>
    ),
  },
  { name: 'Keysight VEE Pro', state: 'active', art: null },
];

function Taskbar() {
  return (
    <footer className="flex h-10 shrink-0 items-stretch bg-[#1c1c1c] text-white">
      <button type="button" aria-label="Start" className="flex w-12 items-center justify-center">
        <svg viewBox="0 0 16 16" className="h-4 w-4">
          <path d="M0 2.3l6.7-1v6.3H0zM7.5 1.2L16 0v7.6H7.5zM0 8.4h6.7v6.3L0 13.7zM7.5 8.4H16V16l-8.5-1.2z" fill="#fff" />
        </svg>
      </button>
      <label className="flex w-[344px] items-center gap-2.5 border border-[#c8c8c8] bg-[#f2f2f2] pl-[11px] text-[#333]">
        <svg viewBox="0 0 18 18" className="h-[18px] w-[18px]">
          <circle cx="11" cy="6.5" r="5.5" fill="none" stroke="#222" strokeWidth="1.3" />
          <path d="M7 10.5L1 17" stroke="#222" strokeWidth="1.3" />
        </svg>
        <input
          type="search"
          aria-label="Search"
          placeholder="Type here to search"
          className="min-w-0 flex-1 font-['Open_Sans',sans-serif] text-sm placeholder:text-[#3a3a3a]"
        />
      </label>
      <button type="button" aria-label="Task View" className="mr-0.5 flex w-12 items-center justify-center">
        <svg viewBox="0 0 24 24" className="h-6 w-6">
          <path
            d="M4.5 8.5h10v8h-10zM4.5 4v2.5h10V4M4.5 21v-2.5h10V21M18.5 4v5M18.5 15v6M17.5 11H20v2.5h-2.5z"
            fill="none"
            stroke="#fff"
            strokeWidth="1.2"
          />
        </svg>
      </button>
      <div className="flex flex-1 gap-px">
        {taskApps.map((app) => (
          <button
            key={app.name}
            type="button"
            aria-label={app.name}
            className={`relative flex w-12 items-center justify-center ${app.state === 'active' ? 'bg-[#4a4a4a]' : ''}`}
          >
            {app.art ? (
              <svg viewBox="0 0 24 24" className="h-6 w-6">
                {app.art}
              </svg>
            ) : (
              <Logo className="h-6 w-6" />
            )}
            {app.state && <span className={`absolute bottom-0 h-0.5 bg-[#76b9ed] ${app.state === 'active' ? 'inset-x-0' : 'inset-x-1'}`} />}
          </button>
        ))}
      </div>
      <div className="flex items-center">
        <button type="button" aria-label="Show hidden icons" className="flex w-6 justify-center">
          <svg viewBox="0 0 12 8" className="h-2 w-3">
            <path d="M1 7l5-5 5 5" fill="none" stroke="#fff" strokeWidth="1.3" />
          </svg>
        </button>
        <button type="button" aria-label="Battery" className="flex w-6 justify-center">
          <svg viewBox="0 0 16 12" className="h-3 w-4">
            <path d="M5.5 2.5h9v7h-9zM15.5 4v4" fill="none" stroke="#fff" />
            <path d="M7 4h6v4H7z" fill="#fff" />
            <path d="M1.5 0v3M4.5 0v3M0 3.5h6M.5 3v2.5L3 7v3h3" fill="none" stroke="#fff" />
          </svg>
        </button>
        <button type="button" aria-label="Network" className="flex w-6 justify-center">
          <svg viewBox="0 0 14 14" className="h-3.5 w-3.5">
            <path d="M1 13C1 6 6 1 13 1" fill="none" stroke="#888" strokeWidth="1.2" />
            <path d="M4 13c0-5 4-9 9-9M7 13c0-3 3-6 6-6M10 13c0-1.5 1-3 3-3" fill="none" stroke="#fff" strokeWidth="1.2" />
            <circle cx="12" cy="12.5" r="1.3" fill="#fff" />
          </svg>
        </button>
        <button type="button" aria-label="Volume" className="flex w-6 justify-center">
          <svg viewBox="0 0 17 14" className="h-3.5 w-[17px]">
            <path d="M1 5h2.5L7 1.5v11L3.5 9H1z" fill="none" stroke="#fff" strokeWidth="1.2" />
            <path d="M9 5q1.5 2 0 4M11 3q3 4 0 8" fill="none" stroke="#fff" strokeWidth="1.2" />
            <path d="M13.5 1.5q4 5.5 0 11" fill="none" stroke="#999" />
          </svg>
        </button>
        <span className="w-[34px] text-center">ENG</span>
        <time className="w-[68px] text-center leading-[18px]">
          1:38 AM
          <br />
          7/21/2020
        </time>
        <button type="button" aria-label="Notifications" className="mr-[17px] ml-1.5 flex w-6 justify-center">
          <svg viewBox="0 0 16 16" className="h-4 w-4">
            <path d="M.7.7h14.6v11h-4.8L8 14.5l-2.5-2.8H.7z" fill="none" stroke="#fff" strokeWidth="1.3" />
          </svg>
        </button>
        <span className="h-10 w-1 border-l border-[#666]" />
      </div>
    </footer>
  );
}

export default function App() {
  return (
    <div className="flex h-screen flex-col overflow-hidden bg-[#f4f4f4] font-['Roboto',sans-serif] text-xs text-black">
      <header className="flex h-[23px] shrink-0 items-center bg-white pr-0.5 pl-0.5">
        <Logo className="h-4 w-4" />
        <span className="ml-1 flex-1">* 2542_example - Keysight VEE Pro</span>
        <button type="button" aria-label="Minimize" className="flex w-[46px] justify-center">
          <svg viewBox="0 0 10 10" className="h-2.5 w-2.5">
            <path d="M0 5.5h10" stroke="#000" />
          </svg>
        </button>
        <button type="button" aria-label="Restore" className="flex w-[46px] justify-center">
          <svg viewBox="0 0 10 10" className="h-2.5 w-2.5">
            <path d="M2.5 2.5v-2h7v7h-2M.5 2.5h7v7h-7z" fill="none" stroke="#000" />
          </svg>
        </button>
        <button type="button" aria-label="Close" className="flex w-[46px] justify-center">
          <svg viewBox="0 0 10 10" className="h-2.5 w-2.5">
            <path d="M0 0l10 10M10 0L0 10" stroke="#000" />
          </svg>
        </button>
      </header>
      <nav className="flex h-[26px] shrink-0 items-center gap-[15px] bg-[#f0f0f0] pl-3">
        {menus.map(([before, key, after]) => (
          <button key={before + key + after} type="button">
            {before}
            <span className="underline underline-offset-2">{key}</span>
            {after}
          </button>
        ))}
      </nav>
      <div className="flex shrink-0 flex-col gap-px bg-[#f4f4f4] pt-px pl-1">
        <div className="flex gap-0.5">
          {toolbarTop.map((items) => (
            <Toolbar key={items[0]} items={items} />
          ))}
        </div>
        <div className="flex gap-0.5">
          {toolbarBottom.map((items) => (
            <Toolbar key={items[0]} items={items} />
          ))}
        </div>
      </div>
      <div className="flex min-h-0 flex-1">
        <PropertiesPanel />
        <div className="flex min-w-0 flex-1 pl-[5px]">
          <MdiWindow />
          <SideTabs />
        </div>
      </div>
      <div className="flex h-6 shrink-0 items-end pl-0.5">
        <button type="button" className="flex h-[21px] items-center gap-1.5 rounded-t border border-b-0 border-[#a0a0a0] px-1 pr-1.5 text-[#555]">
          <svg viewBox="0 0 16 16" className="h-3.5 w-3.5">
            {icons.Output}
          </svg>
          Output
        </button>
      </div>
      <div className="flex h-6 shrink-0 items-center gap-px border-t border-[#d8d8d8] bg-[#f0f0f0] pl-1">
        <p className="flex-1">1 objects selected</p>
        <span className="h-5 w-[114px] border border-[#a8a8a8] pl-1 leading-[18px]">ExecMode: VEE9</span>
        <span className="h-5 w-10 border border-[#a8a8a8] text-center leading-[18px] text-[#a0a0a0]">PROF</span>
        <span className="h-5 w-[39px] border border-[#a8a8a8] text-center leading-[18px]">MOD</span>
        <span className="h-5 w-[35px] border border-[#a8a8a8] text-center leading-[18px] text-[#a0a0a0]">WEB</span>
        <svg viewBox="0 0 12 12" className="mt-2 ml-1.5 h-3 w-3" aria-hidden="true">
          <path d="M9 1h2v2H9zM5 5h2v2H5zM9 5h2v2H9zM1 9h2v2H1zM5 9h2v2H5zM9 9h2v2H9z" fill="#a8a8a8" />
        </svg>
      </div>
      <Taskbar />
    </div>
  );
}
